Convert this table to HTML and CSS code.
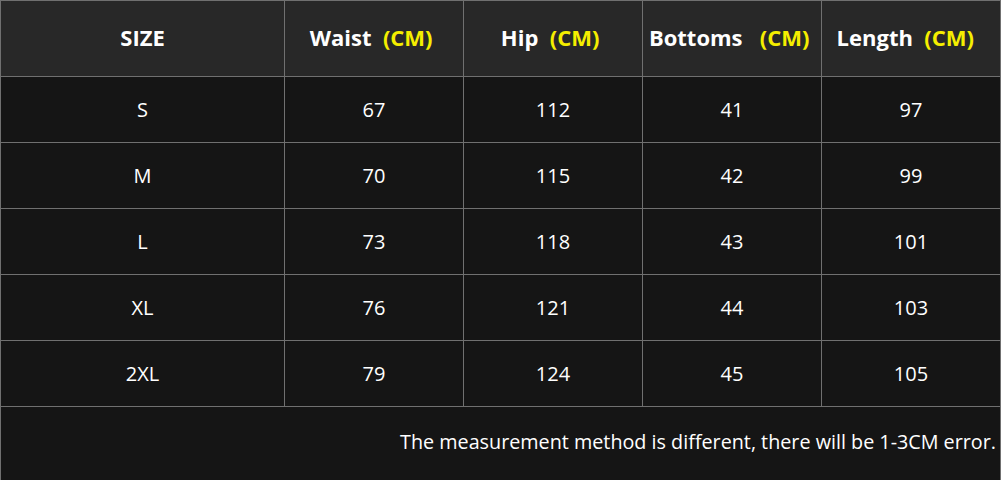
FILE: index.html
```html
<!DOCTYPE html>
<html>
<head>
<meta charset="utf-8">
<link rel="stylesheet" href="styles.css">
</head>
<body>
<table class="chart">
  <colgroup>
    <col class="c-size"><col class="c-n"><col class="c-n"><col class="c-n"><col class="c-n">
  </colgroup>
  <thead>
    <tr class="head">
      <th>SIZE</th>
      <th>Waist&nbsp;&nbsp;<span class="unit">(CM)</span>&nbsp;</th>
      <th>Hip&nbsp;&nbsp;<span class="unit">(CM)</span>&nbsp;</th>
      <th>Bottoms&nbsp;&nbsp;&nbsp;<span class="unit">(CM)</span>&nbsp;</th>
      <th>Length&nbsp;&nbsp;<span class="unit">(CM)</span>&nbsp;&nbsp;</th>
    </tr>
  </thead>
  <tbody>
    <tr><td>S</td><td>67</td><td>112</td><td>41</td><td>97</td></tr>
    <tr><td>M</td><td>70</td><td>115</td><td>42</td><td>99</td></tr>
    <tr><td>L</td><td>73</td><td>118</td><td>43</td><td>101</td></tr>
    <tr><td>XL</td><td>76</td><td>121</td><td>44</td><td>103</td></tr>
    <tr><td>2XL</td><td>79</td><td>124</td><td>45</td><td>105</td></tr>
    <tr class="note"><td colspan="5">The measurement method is different, there will be 1-3CM error.</td></tr>
  </tbody>
</table>
</body>
</html>
```
FILE: styles.css
```css
html, body {
  margin: 0;
  padding: 0;
  background: #151515;
}
.chart {
  border-collapse: collapse;
  table-layout: fixed;
  width: 1001px;
  font-family: "Open Sans", "Noto Sans", sans-serif;
  color: #ffffff;
}
.c-size { width: 284px; }
.c-n { width: 179px; }
.chart th, .chart td {
  border: 1px solid #707070;
  text-align: center;
  padding: 0;
}
.head th {
  background: #282828;
  height: 72px;
  padding-bottom: 3px;
  font-weight: 700;
  font-size: 22px;
  white-space: nowrap;
}
.unit { color: #f5ee00; }
.chart td {
  background: #151515;
  height: 64px;
  padding-bottom: 1px;
  font-size: 20px;
}
.note td {
  height: 68px;
  padding-bottom: 12px;
  text-align: right;
  font-size: 19.75px;
  padding-right: 4px;
  vertical-align: middle;
}
```
